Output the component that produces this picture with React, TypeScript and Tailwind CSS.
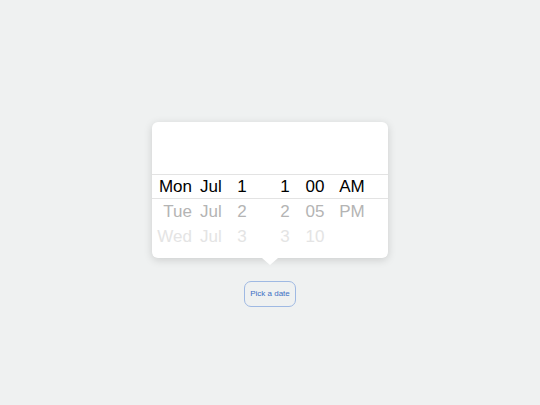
const rows = [
  { day: "Mon", month: "Jul", date: "1", hour: "1", min: "00", ampm: "AM" },
  { day: "Tue", month: "Jul", date: "2", hour: "2", min: "05", ampm: "PM" },
  { day: "Wed", month: "Jul", date: "3", hour: "3", min: "10", ampm: "" },
];

const rowColors = ["text-black", "text-[#b4b4b4]", "text-[#e4e4e4]"];

const PickerRow = ({ row, index }: { row: (typeof rows)[number]; index: number }) => {
  return (
    <div
      className={`flex h-[25px] items-center text-[17px] leading-none ${rowColors[index]} ${
        index === 0 ? "border-y border-[#e3e3e3]" : ""
      }`}
    >
      <span className="w-[40px] text-right">{row.day}</span>
      <span className="ml-[8px] w-[20px]">{row.month}</span>
      <span className="w-[44px] text-center">{row.date}</span>
      <span className="ml-[4px] w-[34px] text-center">{row.hour}</span>
      <span className="w-[26px] text-center">{row.min}</span>
      <span className="w-[48px] text-center">{row.ampm}</span>
    </div>
  );
};

const App = () => {
  return (
    <div
      className="flex h-[405px] w-[540px] flex-col items-center bg-[#eff1f1]"
      style={{ fontFamily: '"Liberation Sans", Arial, sans-serif' }}
    >
      <div className="relative mt-[122px] h-[136px] w-[236px] rounded-[6px] bg-white shadow-[0_2px_8px_rgba(0,0,0,0.15)]">
        <div className="pt-[52px]">
          {rows.map((row, i) => (
            <PickerRow key={i} row={row} index={i} />
          ))}
        </div>
        <div className="absolute left-[110px] bottom-[-7px] h-0 w-0 border-x-[8px] border-t-[7px] border-x-transparent border-t-white" />
      </div>
      <button
        type="button"
        className="mt-[23px] h-[26px] w-[52px] rounded-[7px] border border-[#9fb9e3] text-[8px] text-[#3d6fc4]"
      >
        Pick a date
      </button>
    </div>
  );
};

export default App;
